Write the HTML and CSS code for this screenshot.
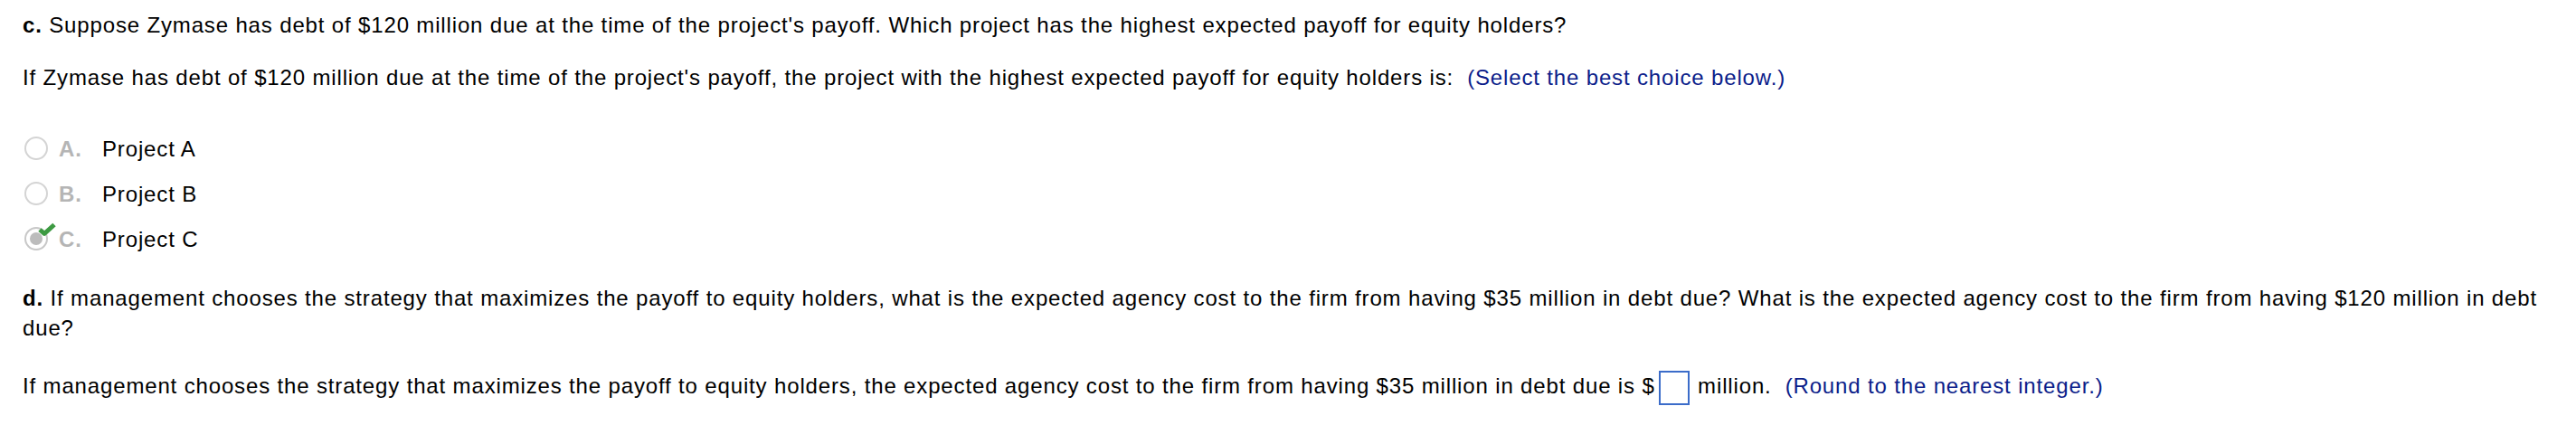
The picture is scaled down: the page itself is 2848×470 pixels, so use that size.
FILE: index.html
```html
<!DOCTYPE html>
<html lang="en">
<head>
  <meta charset="UTF-8" />
  <title>Question Part c and d</title>
  <link rel="stylesheet" href="styles.css">
</head>
<body>
  <!-- Part c -->
  <div class="question">
    <p class="prompt"><b>c.</b> Suppose Zymase has debt of $120 million due at the time of the project's payoff. Which project has the highest expected payoff for equity holders?</p>
    <p class="answer-line">If Zymase has debt of $120 million due at the time of the project's payoff, the project with the highest expected payoff for equity holders is:&nbsp; <span class="hint">(Select the best choice below.)</span></p>

    <ul class="choices">
      <li class="choice">
        <span class="radio"></span>
        <span class="letter">A.</span>
        <span class="choice-text">Project A</span>
      </li>
      <li class="choice">
        <span class="radio"></span>
        <span class="letter">B.</span>
        <span class="choice-text">Project B</span>
      </li>
      <li class="choice">
        <span class="radio selected">
          <svg class="check" width="22" height="16" viewBox="0 0 22 16">
            <path d="M3 8 L8 12.5 L19 2.5" fill="none" stroke="#3d9a42" stroke-width="5" stroke-linejoin="round"/>
          </svg>
        </span>
        <span class="letter">C.</span>
        <span class="choice-text">Project C</span>
      </li>
    </ul>
  </div>

  <!-- Part d -->
  <div class="question">
    <p class="prompt part-d"><b>d.</b> If management chooses the strategy that maximizes the payoff to equity holders, what is the expected agency cost to the firm from having $35 million in debt due? What is the expected agency cost to the firm from having $120 million in debt due?</p>
    <p class="answer-line last">If management chooses the strategy that maximizes the payoff to equity holders, the expected agency cost to the firm from having $35 million in debt due is $<span class="blank"></span> million.&nbsp; <span class="hint">(Round to the nearest integer.)</span></p>
  </div>
</body>
</html>
```

FILE: styles.css
```css
/* Base */
* {
  margin: 0;
  padding: 0;
  box-sizing: border-box;
}
body {
  font-family: "Liberation Sans", Arial, sans-serif;
  font-size: 24px;
  line-height: 33px;
  letter-spacing: 0.85px;
  color: #000;
  background: #fff;
  padding: 11px 30px 0 25px;
}

/* Question text */
.answer-line {
  margin-top: 25px;
}
.hint {
  color: #0b1d8a;
}

/* Choices */
.choices {
  list-style: none;
  margin-top: 37px;
}
.choice {
  display: flex;
  align-items: center;
  height: 50px;
}
.radio {
  position: relative;
  width: 26px;
  height: 26px;
  margin: 0 12px 0 2px;
  border: 2px solid #d4d4d4;
  border-radius: 50%;
  flex-shrink: 0;
}
.radio.selected {
  border-color: #c8c8c8;
}
.radio.selected::before {
  content: "";
  position: absolute;
  left: 4px;
  top: 4px;
  width: 14px;
  height: 14px;
  border-radius: 50%;
  background: #bcbcbc;
}
.check {
  position: absolute;
  left: 12px;
  top: -7px;
}
.letter {
  width: 48px;
  font-weight: bold;
  color: #b5b5b5;
}

/* Part d */
.part-d {
  margin-top: 24px;
}
.last {
  margin-top: 31px;
}
.blank {
  display: inline-block;
  width: 34px;
  height: 38px;
  margin: 0 2px 0 4px;
  border: 2px solid #3b6cc9;
  vertical-align: middle;
}
```
